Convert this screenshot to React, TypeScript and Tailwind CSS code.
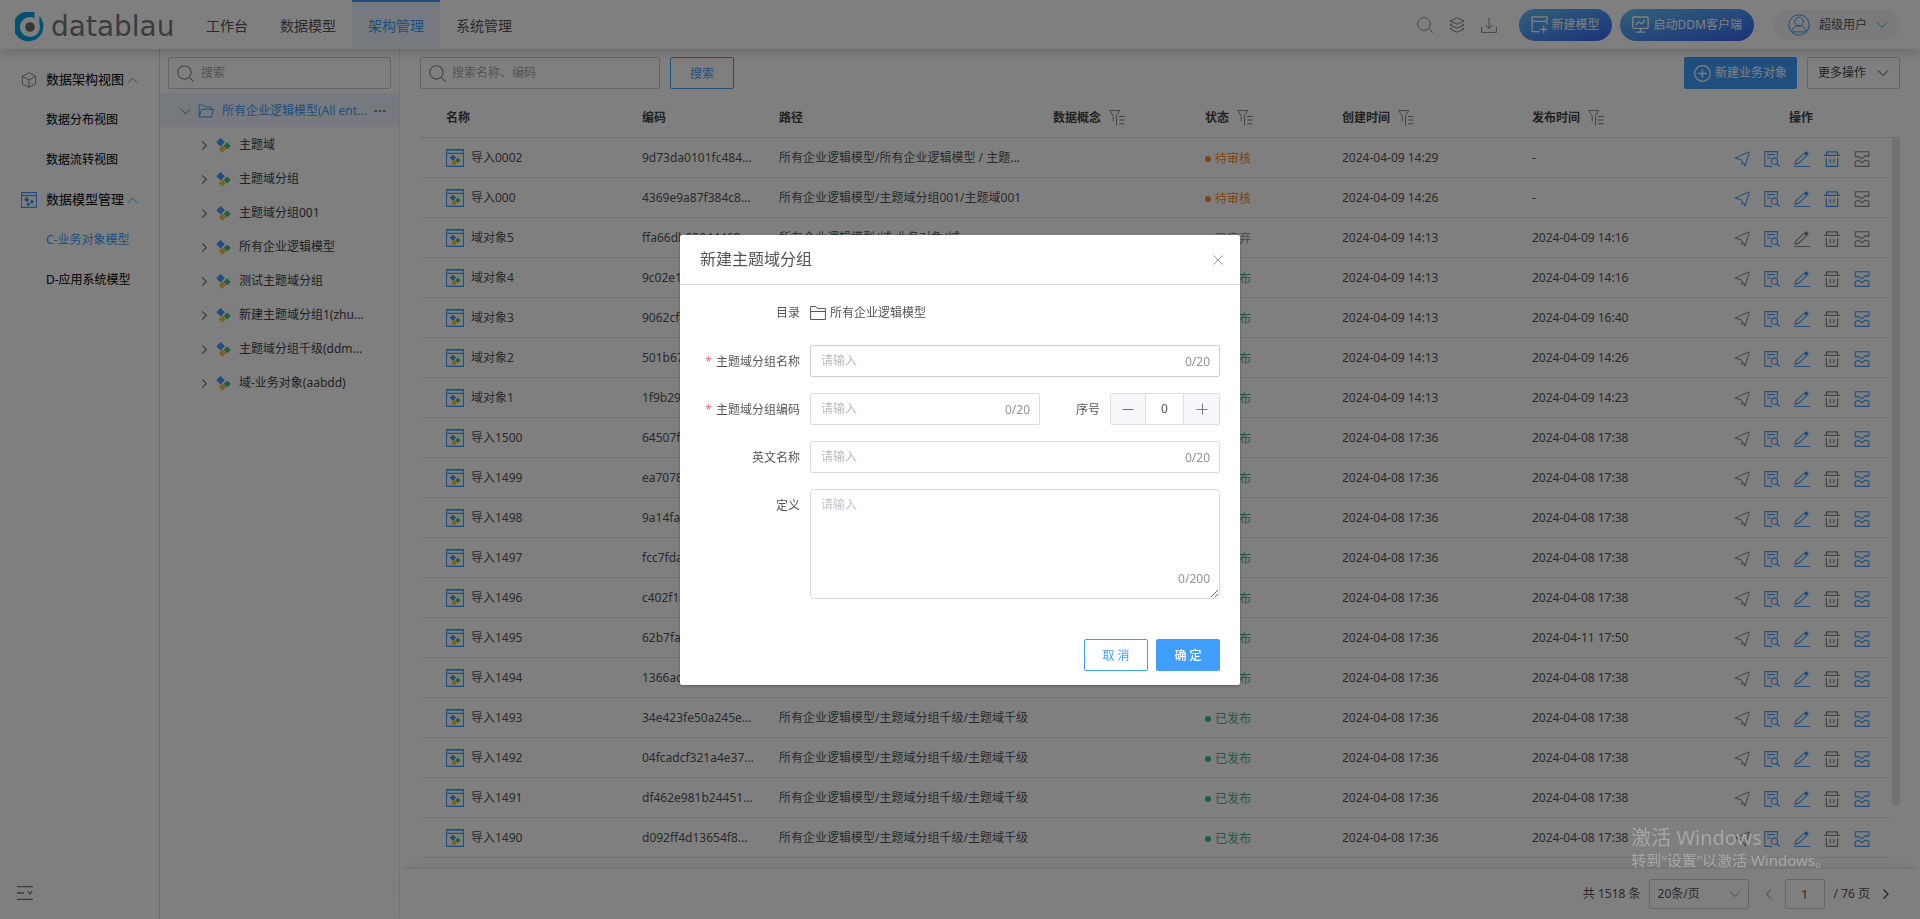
import React from 'react';

type IconProps = { className?: string };

function Svg({ className = 'size-4', children, box = 16 }: IconProps & { children: React.ReactNode; box?: number }) {
  return (
    <svg
      viewBox={`0 0 ${box} ${box}`}
      className={`shrink-0 ${className}`}
      fill="none"
      stroke="currentColor"
      strokeWidth="1"
      aria-hidden="true"
    >
      {children}
    </svg>
  );
}

const SearchIcon = ({ className }: IconProps) => (
  <Svg className={className}>
    <circle cx="7" cy="7" r="6.3" />
    <path d="M11.5 11.5 15.6 15.6" />
  </Svg>
);

const ChevronUp = ({ className }: IconProps) => (
  <Svg className={className} box={12}>
    <path d="M1 8.5 6 3.5 11 8.5" />
  </Svg>
);

const ChevronDown = ({ className }: IconProps) => (
  <Svg className={className} box={12}>
    <path d="M1 3.5 6 8.5 11 3.5" />
  </Svg>
);

const ChevronRight = ({ className }: IconProps) => (
  <Svg className={className} box={12}>
    <path d="M3.5 1.5 8 6 3.5 10.5" strokeWidth="1.3" />
  </Svg>
);

const ChevronLeft = ({ className }: IconProps) => (
  <Svg className={className} box={12}>
    <path d="M8 1.5 3.5 6 8 10.5" strokeWidth="1.3" />
  </Svg>
);

const CubeIcon = ({ className }: IconProps) => (
  <Svg className={className}>
    <path d="M8 .7 14.6 4.3V11.7L8 15.3 1.4 11.7V4.3ZM1.4 4.3 8 8 14.6 4.3M8 8V15.3" />
  </Svg>
);

const LayersIcon = ({ className }: IconProps) => (
  <Svg className={className}>
    <path d="M8 .8 15 4 8 7.2 1 4ZM3 6.7 1 8l7 3.2L15 8l-2-1.3M3 10.7 1 12l7 3.2 7-3.2-2-1.3" />
  </Svg>
);

const DownloadIcon = ({ className }: IconProps) => (
  <Svg className={className}>
    <path d="M8 .5V11.5M4.5 8 8 11.5 11.5 8M.6 10V15.4H15.4V10" />
  </Svg>
);

const NewModelIcon = ({ className }: IconProps) => (
  <Svg className={className}>
    <path d="M8 14.8H1V.9H15V8M1 5H15M12 9.2V16M8.6 12.6H15.4" strokeWidth="1.2" />
  </Svg>
);

const ClientIcon = ({ className }: IconProps) => (
  <Svg className={className}>
    <rect x=".8" y="1" width="14.4" height="10.6" rx="1" strokeWidth="1.3" />
    <path d="M3.5 8.5 6.5 5.5 8.8 7.5 12.3 4M8 11.6V15M3.5 15.2H12.5" strokeWidth="1.3" />
  </Svg>
);

const UserIcon = ({ className }: IconProps) => (
  <Svg className={className} box={22}>
    <circle cx="11" cy="11" r="10.2" />
    <circle cx="11" cy="7.6" r="4.3" />
    <path d="M3.6 17.9C4.3 14 7.2 11.9 11 11.9S17.7 14 18.4 17.9Z" />
  </Svg>
);

const PlusCircleIcon = ({ className }: IconProps) => (
  <Svg className={className}>
    <circle cx="8" cy="8" r="7.4" strokeWidth="1.2" />
    <path d="M8 4V12M4 8H12" strokeWidth="1.2" />
  </Svg>
);

const FilterIcon = ({ className }: IconProps) => (
  <Svg className={className}>
    <path d="M.6 .6H10.8L7.5 5.5V15.6M.6 .6 4.2 5.8V11.5M10 6.5H15.6M10 10H15.6M10 13.8H15.6" />
  </Svg>
);

const FolderIcon = ({ className }: IconProps) => (
  <Svg className={className}>
    <path d="M.6 14.5V1.5H6L7.6 3.6H15.4V14.5ZM.6 6.5H15.4" />
  </Svg>
);

const FolderOpenIcon = ({ className }: IconProps) => (
  <Svg className={className}>
    <path d="M1.2 14V2H5.6L7.2 4H13.4V6.3M1.2 14 3.6 6.3H15.3L13.3 14Z" />
  </Svg>
);

function Diamonds() {
  return (
    <g stroke="none">
      <path d="M6.4 7.4 10 11 6.4 14.8 2.8 11Z" fill="#f0c33c" />
      <path d="M11.2 4.4 14.8 7.8 11.2 11.4 7.6 7.8Z" fill="#46bc82" />
      <path d="M4.6 .1 8.9 4.2 4.6 8.6 .3 4.2Z" fill="#409eff" />
    </g>
  );
}

const DomainIcon = ({ className }: IconProps) => (
  <Svg className={className} box={15}>
    <Diamonds />
  </Svg>
);

const ObjectIcon = ({ className }: IconProps) => (
  <Svg className={className} box={18}>
    <path d="M.5 .5H17.5V2H.5Z" fill="#8cc4ff" stroke="none" />
    <path d="M.6 .6H17.4V17.4H.6ZM.6 4.4H17.4" stroke="#409eff" strokeWidth="1.1" />
    <g transform="translate(3.4 5.4) scale(.76)">
      <Diamonds />
    </g>
  </Svg>
);

const ModelManageIcon = ({ className }: IconProps) => (
  <Svg className={className}>
    <path d="M.6 .6H15.4V15.4H.6ZM.6 3.6H15.4" strokeWidth="1.1" />
    <path
      d="M5.5 4.8 8.6 7.5 6 10.4 3 7.8ZM10.7 7.4 13.2 9.5 11 12 8.6 9.8ZM7.2 10.2 9.4 12 7.4 14.3 5.2 12.4Z"
      fill="currentColor"
      stroke="none"
    />
  </Svg>
);

const SendIcon = () => (
  <Svg>
    <path d="M15.3 .8 .9 7.2 7.7 8.8 8 13.4 9.5 11.6 11.2 15.2Z" />
  </Svg>
);

const PreviewIcon = () => (
  <Svg>
    <path d="M8 15.4H.8V.6H13.4V6.5M3 3.6H11.2M3 7H7" strokeWidth="1.1" />
    <circle cx="10.4" cy="10.2" r="3.1" strokeWidth="1.1" />
    <path d="M12.6 12.5 15.6 15.5" strokeWidth="1.1" />
  </Svg>
);

const EditIcon = () => (
  <Svg>
    <path d="M0 15.5H16M1 13 1.8 10 10.4 2.2 12.8 4.6 4.4 12.4Z" strokeWidth="1.1" />
    <path d="M11 1.8 12.4 .6 14.4 2.8 13.2 4Z" fill="currentColor" />
  </Svg>
);

const TrashIcon = () => (
  <Svg>
    <path d="M0 4.4H16M2.6 4V.8H13.4V4M2.4 7V15.4H13.6V7M6.3 8V12.6M9.7 8V12.6" strokeWidth="1.2" />
  </Svg>
);

const ArchiveIcon = () => (
  <Svg>
    <path
      d="M1.2 5.6V.7H14.8V5.4L11.2 4.9 7.8 7.8 4.4 5.6ZM1.2 15.4V10.8L4.4 9.2 7.8 11.8 11.2 9.2 14.8 10.2V15.4Z"
      strokeWidth="1.1"
    />
  </Svg>
);

const navItems = ['工作台', '数据模型', '架构管理', '系统管理'];

const treeItems = [
  '主题域',
  '主题域分组',
  '主题域分组001',
  '所有企业逻辑模型',
  '测试主题域分组',
  '新建主题域分组1(zhu...',
  '主题域分组千级(ddm...',
  '域-业务对象(aabdd)',
];

type Status = '待审核' | '已废弃' | '已发布';

type Row = { name: string; code: string; path: string; status: Status; created: string; published: string };

const DEEP_PATH = '所有企业逻辑模型/主题域分组千级/主题域千级';
const DOMAIN_PATH = '所有企业逻辑模型/域-业务对象/域';

const domainRow = (name: string, code: string, status: Status, published: string): Row => ({
  name,
  code,
  path: DOMAIN_PATH,
  status,
  created: '2024-04-09 14:13',
  published,
});

const importRow = (name: string, code: string, published = '2024-04-08 17:38'): Row => ({
  name,
  code,
  path: DEEP_PATH,
  status: '已发布',
  created: '2024-04-08 17:36',
  published,
});

const rows: Row[] = [
  {
    name: '导入0002',
    code: '9d73da0101fc484...',
    path: '所有企业逻辑模型/所有企业逻辑模型 / 主题...',
    status: '待审核',
    created: '2024-04-09 14:29',
    published: '-',
  },
  {
    name: '导入000',
    code: '4369e9a87f384c8...',
    path: '所有企业逻辑模型/主题域分组001/主题域001',
    status: '待审核',
    created: '2024-04-09 14:26',
    published: '-',
  },
  domainRow('域对象5', 'ffa66db03944468...', '已废弃', '2024-04-09 14:16'),
  domainRow('域对象4', '9c02e1b7d5a2438...', '已发布', '2024-04-09 14:16'),
  domainRow('域对象3', '9062cf41e8b7402...', '已发布', '2024-04-09 16:40'),
  domainRow('域对象2', '501b67c2fa904d1...', '已发布', '2024-04-09 14:26'),
  domainRow('域对象1', '1f9b29d04c6e4b7...', '已发布', '2024-04-09 14:23'),
  importRow('导入1500', '64507fb2c81d4e9...'),
  importRow('导入1499', 'ea7078c15d2f4a6...'),
  importRow('导入1498', '9a14fa60b7e34c2...'),
  importRow('导入1497', 'fcc7fda29e1b485...'),
  importRow('导入1496', 'c402f18d7ab6430...'),
  importRow('导入1495', '62b7fa3e05c94d8...', '2024-04-11 17:50'),
  importRow('导入1494', '1366ac9f4d2b47e...'),
  importRow('导入1493', '34e423fe50a245e...'),
  importRow('导入1492', '04fcadcf321a4e37...'),
  importRow('导入1491', 'df462e981b24451...'),
  importRow('导入1490', 'd092ff4d13654f8...'),
];

const statusColor: Record<Status, string> = {
  待审核: 'text-[#f58a2c]',
  已废弃: 'text-[#999999]',
  已发布: 'text-[#40b883]',
};

function enabledActions(status: Status) {
  if (status === '待审核') return [true, true, true, true, false];
  if (status === '已废弃') return [false, true, false, false, false];
  return [false, true, true, false, true];
}

const actions = [
  { label: '提交', Icon: SendIcon },
  { label: '查看', Icon: PreviewIcon },
  { label: '编辑', Icon: EditIcon },
  { label: '删除', Icon: TrashIcon },
  { label: '废弃', Icon: ArchiveIcon },
];

function Header() {
  return (
    <header className="relative z-10 flex h-[49px] shrink-0 items-center bg-white pl-[15px] pr-5 shadow-[0_2px_12px_rgba(0,0,0,0.2)]">
      <a href="#" className="flex h-full w-[175px] shrink-0 items-center gap-[6px] pt-1" aria-label="datablau">
        <svg viewBox="0 0 30 30" className="size-[30px] shrink-0" aria-hidden="true">
          <path d="M19.5 .6V6.2A9.9 9.9 0 1 0 24.4 12V4.1A15 15 0 1 1 19.5 .6Z" fill="#00a3e0" />
          <circle cx="15" cy="15" r="4.8" fill="#6e6e6e" />
        </svg>
        <span className="font-['DejaVu_Sans',sans-serif] text-[28px] leading-[30px] text-[#777777]">datablau</span>
      </a>
      <nav className="flex h-full">
        {navItems.map((item) => (
          <a
            key={item}
            href="#"
            className={
              item === '架构管理'
                ? 'flex items-center border-t-2 border-[#409eff] bg-[#ecf5ff] px-4 text-sm text-[#409eff]'
                : 'flex items-center border-t-2 border-transparent px-4 text-sm text-[#555555]'
            }
          >
            {item}
          </a>
        ))}
      </nav>
      <div className="ml-auto flex items-center">
        <div className="flex gap-4 text-[#888888]">
          <button aria-label="搜索">
            <SearchIcon />
          </button>
          <button aria-label="层级">
            <LayersIcon />
          </button>
          <button aria-label="下载">
            <DownloadIcon />
          </button>
        </div>
        <button className="ml-[22px] flex h-8 items-center gap-1 rounded-full bg-linear-to-br from-[#66c0f4] to-[#3a62f0] px-3 text-xs text-white">
          <NewModelIcon className="size-[17px]" />
          新建模型
        </button>
        <button className="ml-2 flex h-8 items-center gap-[5px] rounded-full bg-linear-to-br from-[#66c0f4] to-[#3a62f0] px-3 text-xs text-white">
          <ClientIcon className="size-[17px]" />
          启动DDM客户端
        </button>
        <button className="ml-5 flex h-[30px] items-center gap-[9px] rounded-full bg-[#f5f5f5] pl-[14px] pr-3 text-xs text-[#555555]">
          <UserIcon className="size-[22px] text-[#409eff]" />
          超级用户
          <ChevronDown className="size-3 text-[#409eff]" />
        </button>
      </div>
    </header>
  );
}

function SideGroup({ icon, title, chevron, items }: { icon: React.ReactNode; title: string; chevron: string; items: string[] }) {
  return (
    <li>
      <button className="flex h-10 w-full items-center pl-5 text-[13px] text-black">
        <span className="mr-2 flex w-[18px] shrink-0 justify-center">{icon}</span>
        {title}
        <ChevronUp className={`ml-[3px] size-[11px] ${chevron}`} />
      </button>
      <ul>
        {items.map((item) => (
          <li key={item}>
            <a
              href="#"
              className={
                item === 'C-业务对象模型'
                  ? 'flex h-10 items-center pl-[46px] text-xs text-[#409eff]'
                  : 'flex h-10 items-center pl-[46px] text-xs text-black'
              }
            >
              {item}
            </a>
          </li>
        ))}
      </ul>
    </li>
  );
}

function Sidebar() {
  return (
    <aside className="flex w-40 shrink-0 flex-col border-r border-[#dcdcdc] pt-[11px]">
      <ul className="flex-1">
        <SideGroup
          icon={<CubeIcon className="size-4 text-[#888888]" />}
          title="数据架构视图"
          chevron="text-[#888888]"
          items={['数据分布视图', '数据流转视图']}
        />
        <SideGroup
          icon={<ModelManageIcon className="size-4 text-[#409eff]" />}
          title="数据模型管理"
          chevron="text-[#409eff]"
          items={['C-业务对象模型', 'D-应用系统模型']}
        />
      </ul>
      <button className="flex h-[52px] items-center pl-4 text-[#777777]" aria-label="收起菜单">
        <Svg className="size-[18px]" box={18}>
          <path d="M1 2.6H17M1 9H8M1 15.4H17M11.8 7.2 14 10 16.2 7.2" strokeWidth="1.3" />
        </Svg>
      </button>
    </aside>
  );
}

function TreePanel() {
  return (
    <section className="flex w-60 shrink-0 flex-col border-r border-[#ebebeb] pt-2">
      <label className="mx-2 flex h-8 items-center gap-[7px] rounded-xs border border-[#cccccc] pl-2 text-[#888888]">
        <SearchIcon className="size-[17px]" />
        <input
          aria-label="搜索"
          placeholder="搜索"
          className="min-w-0 flex-1 bg-transparent text-xs outline-none placeholder:text-[#aaaaaa]"
        />
      </label>
      <ul className="mt-1 text-xs text-[#444444]">
        <li className="flex h-[34px] items-center bg-[#ecf5ff] pl-5 pr-[13px] pt-0.5 text-[#409eff]">
          <ChevronDown className="size-[11px] text-[#777777]" />
          <FolderOpenIcon className="ml-[7px] size-4" />
          <span className="ml-2 flex-1 whitespace-nowrap">所有企业逻辑模型(All ent...</span>
          <Svg className="size-3 text-[#888888]" box={12}>
            <path d="M.5 6H3M4.8 6H7.3M9 6H11.5" strokeWidth="2" />
          </Svg>
        </li>
        {treeItems.map((item) => (
          <li key={item} className="flex h-[34px] items-center pl-[39px] pt-0.5">
            <ChevronRight className="size-[11px] text-[#777777]" />
            <DomainIcon className="ml-[6px] size-[15px]" />
            <span className="ml-2 whitespace-nowrap">{item}</span>
          </li>
        ))}
      </ul>
    </section>
  );
}

function Toolbar() {
  return (
    <div className="flex h-8 shrink-0 items-center">
      <label className="flex h-8 w-60 items-center gap-[6px] rounded-xs border border-[#cccccc] pl-2 text-[#888888]">
        <SearchIcon className="size-[17px]" />
        <input
          aria-label="搜索名称、编码"
          placeholder="搜索名称、编码"
          className="min-w-0 flex-1 bg-transparent text-xs outline-none placeholder:text-[#aaaaaa]"
        />
      </label>
      <button className="ml-[10px] h-8 w-16 rounded-xs border border-[#409eff] pt-0.5 text-xs text-[#409eff]">搜索</button>
      <button className="ml-auto flex h-8 items-center gap-1 rounded-xs bg-[#409eff] px-[10px] text-xs text-white">
        <PlusCircleIcon className="size-[17px]" />
        新建业务对象
      </button>
      <button className="ml-[10px] flex h-8 items-center gap-[11px] rounded-xs border border-[#cccccc] px-[10px] text-xs text-[#444444]">
        更多操作
        <ChevronDown className="size-3" />
      </button>
    </div>
  );
}

function HeadCell({ title, filter, className }: { title: string; filter?: boolean; className: string }) {
  return (
    <th scope="col" className={`pt-[3px] text-left font-bold ${className}`}>
      <span className="flex items-center gap-2">
        {title}
        {filter && <FilterIcon className="size-4 text-[#888888]" />}
      </span>
    </th>
  );
}

function ObjectTable() {
  return (
    <div className="relative flex-1 overflow-hidden">
      <table className="w-full table-fixed border-collapse whitespace-nowrap text-xs text-[#555555]">
        <colgroup>
          <col className="w-[212px]" />
          <col className="w-[137px]" />
          <col />
          <col className="w-[152px]" />
          <col className="w-[137px]" />
          <col className="w-[190px]" />
          <col className="w-[190px]" />
          <col className="w-[180px]" />
          <col className="w-2" />
        </colgroup>
        <thead>
          <tr className="h-10 border-b border-[#dcdcdc] text-[#444444]">
            <HeadCell title="名称" className="pl-[26px]" />
            <HeadCell title="编码" className="pl-[10px]" />
            <HeadCell title="路径" className="pl-[10px]" />
            <HeadCell title="数据概念" filter className="pl-[10px]" />
            <HeadCell title="状态" filter className="pl-[10px]" />
            <HeadCell title="创建时间" filter className="pl-[10px]" />
            <HeadCell title="发布时间" filter className="pl-[10px]" />
            <th scope="col" className="pr-0.5 pt-[3px] font-bold">
              操作
            </th>
            <td />
          </tr>
        </thead>
        <tbody>
          {rows.map((row) => {
            const enabled = enabledActions(row.status);
            return (
              <tr key={row.name} className="h-10">
                <td className="border-b border-[#ebebeb] pl-[26px] pt-0.5">
                  <span className="flex items-center gap-[7px]">
                    <ObjectIcon className="size-[18px]" />
                    {row.name}
                  </span>
                </td>
                <td className="border-b border-[#ebebeb] pl-[10px] pt-0.5">{row.code}</td>
                <td className="border-b border-[#ebebeb] pl-[10px] pt-0.5">{row.path}</td>
                <td className="border-b border-[#ebebeb] pl-[10px]" />
                <td className="border-b border-[#ebebeb] pl-[10px] pt-[3px]">
                  <span className={`flex items-center gap-1 ${statusColor[row.status]}`}>
                    <span className="size-[6px] rounded-full bg-current" />
                    {row.status}
                  </span>
                </td>
                <td className="border-b border-[#ebebeb] pl-[10px] pt-0.5">{row.created}</td>
                <td className="border-b border-[#ebebeb] pl-[10px] pt-0.5">{row.published}</td>
                <td className="border-b border-[#ebebeb]">
                  <span className="flex justify-center gap-[14px] pt-1">
                    {actions.map(({ label, Icon }, i) => (
                      <button
                        key={label}
                        aria-label={label}
                        disabled={!enabled[i]}
                        className={enabled[i] ? 'text-[#409eff]' : 'text-[#888888]'}
                      >
                        <Icon />
                      </button>
                    ))}
                  </span>
                </td>
                <td />
              </tr>
            );
          })}
        </tbody>
      </table>
      <div className="absolute right-0 top-10 h-[669px] w-2 rounded-full bg-[#e4e4e4]" />
    </div>
  );
}

function Pager() {
  return (
    <footer className="flex h-[50px] shrink-0 items-center justify-end pr-7 text-xs text-[#555555] shadow-[0_-5px_8px_-5px_rgba(0,0,0,0.18)]">
      <span>共 1518 条</span>
      <span className="relative ml-2 flex items-center">
        <select
          aria-label="每页条数"
          className="h-[30px] w-[100px] appearance-none rounded-xs border border-[#cccccc] bg-transparent pl-2 text-xs text-[#555555]"
        >
          <option>20条/页</option>
        </select>
        <ChevronDown className="pointer-events-none absolute right-2 size-3 text-[#999999]" />
      </span>
      <button className="ml-[14px] text-[#bbbbbb]" aria-label="上一页">
        <ChevronLeft className="size-3" />
      </button>
      <input
        aria-label="页码"
        defaultValue="1"
        className="ml-[10px] h-[30px] w-10 rounded-xs border border-[#cccccc] bg-transparent text-center text-xs outline-none"
      />
      <span className="ml-[9px]">/ 76 页</span>
      <button className="ml-[10px]" aria-label="下一页">
        <ChevronRight className="size-3" />
      </button>
    </footer>
  );
}

function Counted({ id, max, border }: { id: string; max: number; border: string }) {
  return (
    <div className={`flex h-8 flex-1 items-center rounded-xs border pl-[10px] pr-[9px] ${border}`}>
      <input
        id={id}
        placeholder="请输入"
        className="min-w-0 flex-1 bg-transparent text-xs outline-none placeholder:text-[#bbbbbb]"
      />
      <span className="pt-px text-xs text-[#909399]">0/{max}</span>
    </div>
  );
}

function FieldLabel({ htmlFor, required, children }: { htmlFor: string; required?: boolean; children: string }) {
  return (
    <label htmlFor={htmlFor} className="h-8 w-[120px] shrink-0 pr-[10px] pt-px text-right text-xs leading-8 text-[#555555]">
      {required && <span className="mr-1 text-[#f56c6c]">*</span>}
      {children}
    </label>
  );
}

function CreateDialog() {
  return (
    <div
      role="dialog"
      aria-modal="true"
      aria-labelledby="dialog-title"
      className="w-[560px] rounded-xs bg-white shadow-[0_1px_3px_rgba(0,0,0,0.3)]"
    >
      <div className="flex h-[50px] items-center justify-between border-b border-[#dcdcdc] pl-5 pr-[17px]">
        <h2 id="dialog-title" className="pb-0.5 text-base text-[#555555]">
          新建主题域分组
        </h2>
        <button aria-label="关闭" className="text-[#909399]">
          <Svg className="size-[10px]" box={10}>
            <path d="M.5 .5 9.5 9.5M9.5 .5 .5 9.5" />
          </Svg>
        </button>
      </div>
      <form className="flex flex-col gap-4 pb-[14px] pl-[10px] pr-5 pt-3" onSubmit={(e) => e.preventDefault()}>
        <div className="flex h-8 items-center text-xs text-[#555555]">
          <span className="w-[120px] pr-[10px] text-right">目录</span>
          <FolderIcon className="size-4" />
          <span className="ml-1">所有企业逻辑模型</span>
        </div>
        <div className="flex">
          <FieldLabel htmlFor="group-name" required>
            主题域分组名称
          </FieldLabel>
          <Counted id="group-name" max={20} border="border-[#c6d0e0]" />
        </div>
        <div className="flex">
          <FieldLabel htmlFor="group-code" required>
            主题域分组编码
          </FieldLabel>
          <Counted id="group-code" max={20} border="border-[#dcdcdc]" />
          <label htmlFor="group-order" className="h-8 w-[70px] pr-[10px] pt-px text-right text-xs leading-8 text-[#555555]">
            序号
          </label>
          <div className="flex h-8 w-[110px] rounded-xs border border-[#dcdfe6]">
            <button
              type="button"
              aria-label="减少"
              className="flex w-[35px] items-center justify-center border-r border-[#dcdfe6] bg-[#f5f7fa] text-[#777777]"
            >
              <Svg className="size-3" box={12}>
                <path d="M.5 6.5H11.5" />
              </Svg>
            </button>
            <input
              id="group-order"
              defaultValue="0"
              className="min-w-0 flex-1 text-center text-xs text-[#555555] outline-none"
            />
            <button
              type="button"
              aria-label="增加"
              className="flex w-[36px] items-center justify-center border-l border-[#dcdfe6] bg-[#f5f7fa] text-[#777777]"
            >
              <Svg className="size-3" box={12}>
                <path d="M.5 6.5H11.5M6.5 .5V11.5" />
              </Svg>
            </button>
          </div>
        </div>
        <div className="flex">
          <FieldLabel htmlFor="group-english">英文名称</FieldLabel>
          <Counted id="group-english" max={20} border="border-[#dcdcdc]" />
        </div>
        <div className="flex">
          <FieldLabel htmlFor="group-definition">定义</FieldLabel>
          <div className="relative flex-1">
            <textarea
              id="group-definition"
              placeholder="请输入"
              className="block h-[110px] w-full resize-y rounded-sm border border-[#d8dae0] px-[10px] py-[5px] text-xs leading-5 outline-none placeholder:text-[#c0c4cc]"
            />
            <span className="absolute bottom-3 right-[10px] text-xs text-[#909399]">0/200</span>
          </div>
        </div>
        <div className="mt-6 flex justify-end gap-2">
          <button type="button" className="h-8 w-16 rounded-xs border border-[#409eff] pt-0.5 text-xs text-[#409eff]">
            取 消
          </button>
          <button type="submit" className="h-8 w-16 rounded-xs bg-[#409eff] pt-0.5 text-xs font-medium text-white">
            确 定
          </button>
        </div>
      </form>
    </div>
  );
}

export default function App() {
  return (
    <div className="flex h-screen flex-col overflow-hidden bg-white font-['Noto_Sans','Noto_Sans_CJK_SC',sans-serif] text-xs">
      <Header />
      <div className="flex min-h-0 flex-1">
        <Sidebar />
        <TreePanel />
        <main className="flex min-w-0 flex-1 flex-col">
          <div className="flex min-h-0 flex-1 flex-col gap-2 px-5 pt-2">
            <Toolbar />
            <ObjectTable />
          </div>
          <Pager />
        </main>
      </div>
      <div className="fixed inset-0 z-20 flex items-start justify-center bg-black/50 pt-[235px]">
        <CreateDialog />
      </div>
      <div className="pointer-events-none fixed bottom-[49px] right-[90px] z-30 text-[#a6a6a6]">
        <p className="text-xl leading-6">激活 Windows</p>
        <p className="text-[15px] leading-5">转到“设置”以激活 Windows。</p>
      </div>
    </div>
  );
}
